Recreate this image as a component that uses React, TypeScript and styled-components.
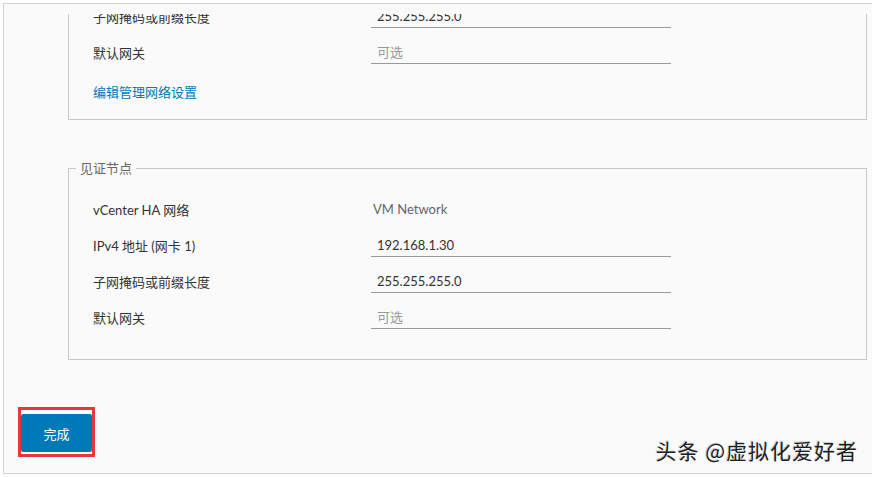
import React, { useLayoutEffect, useRef } from 'react';
import styled, { createGlobalStyle } from 'styled-components';

const GlobalStyle = createGlobalStyle`
    html, body {
        margin: 0;
        padding: 0;
        background: #fff;
    }
    body {
        font-family: Lato, "Noto Sans CJK SC", sans-serif;
    }
`;

interface RowData {
    label: string;
    value?: string;
    placeholder?: string;
    readOnly?: boolean;
}

const passiveRows: RowData[] = [
    { label: 'vCenter HA 网络', value: 'VM Network', readOnly: true },
    { label: 'IPv4 地址 (网卡 1)', value: '192.168.1.20' },
    { label: '子网掩码或前缀长度', value: '255.255.255.0' },
    { label: '默认网关', placeholder: '可选' },
];

const witnessRows: RowData[] = [
    { label: 'vCenter HA 网络', value: 'VM Network', readOnly: true },
    { label: 'IPv4 地址 (网卡 1)', value: '192.168.1.30' },
    { label: '子网掩码或前缀长度', value: '255.255.255.0' },
    { label: '默认网关', placeholder: '可选' },
];

const FormRow: React.FC<{ row: RowData }> = ({ row }) => (
    <Row>
        <Label>{row.label}</Label>
        {row.readOnly ? (
            <StaticValue>{row.value}</StaticValue>
        ) : (
            <Input defaultValue={row.value} placeholder={row.placeholder} />
        )}
    </Row>
);

const App: React.FC = () => {
    const viewRef = useRef<HTMLDivElement>(null);

    useLayoutEffect(() => {
        const el = viewRef.current;
        if (el) el.scrollTop = el.scrollHeight;
    }, []);

    return (
        <Page>
            <GlobalStyle />
            <Frame>
                <Viewport ref={viewRef}>
                    <Content>
                        <Fieldset>
                            <Legend>被动节点</Legend>
                            <FieldBody $bottom={18}>
                                {passiveRows.map((r) => (
                                    <FormRow key={r.label} row={r} />
                                ))}
                                <EditLink href="#">编辑管理网络设置</EditLink>
                            </FieldBody>
                        </Fieldset>

                        <Fieldset>
                            <Legend>见证节点</Legend>
                            <FieldBody $bottom={24}>
                                {witnessRows.map((r) => (
                                    <FormRow key={r.label} row={r} />
                                ))}
                            </FieldBody>
                        </Fieldset>
                    </Content>
                </Viewport>
                <Footer>
                    <Highlight>
                        <PrimaryButton>完成</PrimaryButton>
                    </Highlight>
                </Footer>
            </Frame>
            <Watermark>头条 @虚拟化爱好者</Watermark>
        </Page>
    );
};
export default App;

const Page = styled.div`
    position: relative;
    width: 872px;
    height: 477px;
    overflow: hidden;
    background: #fff;
    padding-top: 3px;
    padding-left: 3px;
    box-sizing: border-box;
`;

const Frame = styled.div`
    display: flex;
    flex-direction: column;
    height: 471px;
    box-sizing: border-box;
    background: #fafafa;
    border-top: 1px solid #d4d4d4;
    border-left: 1px solid #d4d4d4;
    border-bottom: 1px solid #d4d4d4;
    padding-top: 10px;
`;

const Viewport = styled.div`
    flex: 1;
    min-height: 0;
    overflow: hidden;
`;

const Content = styled.div`
    display: flex;
    flex-direction: column;
    gap: 39px;
    padding: 0 5px 47px 64px;
`;

const Fieldset = styled.fieldset`
    margin: 0;
    padding: 0;
    min-width: 0;
    border: 1px solid #c8c8c8;
`;

const Legend = styled.legend`
    margin-left: 7px;
    padding: 0 4px;
    font-size: 13px;
    line-height: 18px;
    color: #666;
`;

const FieldBody = styled.div<{ $bottom: number }>`
    display: flex;
    flex-direction: column;
    padding: 14px 24px ${(p) => p.$bottom}px 24px;
`;

const Row = styled.div`
    display: grid;
    grid-template-columns: 278px 300px;
    align-items: center;
    height: 36px;
`;

const Label = styled.div`
    font-size: 13px;
    color: #333;
    white-space: nowrap;
`;

const StaticValue = styled.div`
    font-size: 13px;
    color: #666;
    padding-left: 2px;
`;

const Input = styled.input`
    box-sizing: border-box;
    width: 300px;
    height: 24px;
    margin: 0;
    padding: 0 6px;
    border: none;
    border-bottom: 1px solid #9a9a9a;
    background: transparent;
    font-family: Lato, "Noto Sans CJK SC", sans-serif;
    font-size: 13px;
    color: #333;
    outline: none;

    &::placeholder {
        color: #999;
    }
`;

const EditLink = styled.a`
    align-self: flex-start;
    margin-top: 13px;
    font-size: 13px;
    line-height: 18px;
    color: #0079b8;
    text-decoration: none;
`;

const Footer = styled.div`
    flex-shrink: 0;
    display: flex;
    padding: 0 0 16px 14px;
`;

const Highlight = styled.div`
    border: 3px solid #e8363a;
    padding: 4px 0 2px;
    background: #fff;
`;

const PrimaryButton = styled.button`
    display: flex;
    align-items: center;
    justify-content: center;
    width: 71px;
    height: 38px;
    border: none;
    border-radius: 2px;
    background: #0079b8;
    color: #fff;
    font-family: Lato, "Noto Sans CJK SC", sans-serif;
    font-size: 13px;
    cursor: pointer;
`;

const Watermark = styled.div`
    position: absolute;
    right: 14px;
    bottom: 12px;
    font-family: "Noto Sans CJK SC", sans-serif;
    font-size: 21px;
    letter-spacing: 1px;
    color: #1e1e1e;
    text-shadow: 1px 1px 0 rgba(255, 255, 255, 0.9), -1px -1px 0 rgba(160, 160, 160, 0.5);
    pointer-events: none;
`;
